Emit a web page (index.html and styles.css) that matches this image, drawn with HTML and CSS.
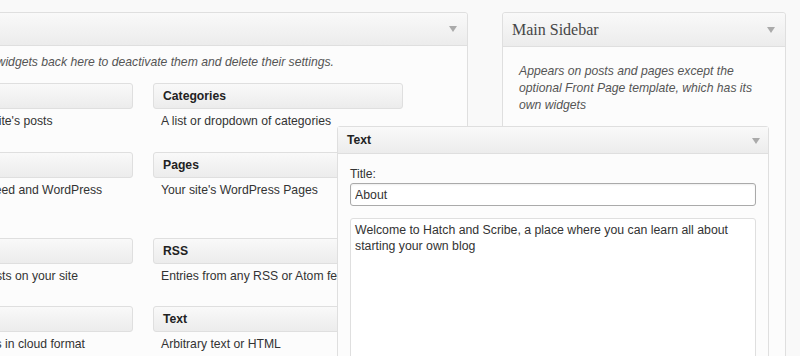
FILE: index.html
```html
<!DOCTYPE html>
<html lang="en">
<head>
    <meta charset="UTF-8">
    <title>Widgets</title>
    <link rel="stylesheet" href="styles.css">
</head>
<body>
    <div class="screen">
        <!-- available widgets -->
        <section class="holder available">
            <div class="holder-name">
                <h3>Available Widgets</h3>
                <span class="arrow"></span>
            </div>
            <p class="help">Drag widgets from here to a sidebar on the right to activate them. Drag widgets back here to deactivate them and delete their settings.</p>
            <div class="widget-list">
                <div class="widget"><div class="widget-top">Archives</div><p class="widget-desc">A monthly archive of your site's posts</p></div>
                <div class="widget"><div class="widget-top">Calendar</div><p class="widget-desc">A calendar of your site's posts</p></div>
                <div class="widget"><div class="widget-top">Categories</div><p class="widget-desc">A list or dropdown of categories</p></div>

                <div class="widget"><div class="widget-top">Custom Menu</div><p class="widget-desc">Use this widget to add one of your custom menus as a widget.</p></div>
                <div class="widget"><div class="widget-top">Meta</div><p class="widget-desc">Log in/out, admin, feed and WordPress links</p></div>
                <div class="widget"><div class="widget-top">Pages</div><p class="widget-desc">Your site's WordPress Pages</p></div>

                <div class="widget"><div class="widget-top">Recent Comments</div><p class="widget-desc">The most recent comments</p></div>
                <div class="widget"><div class="widget-top">Recent Posts</div><p class="widget-desc">The most recent posts on your site</p></div>
                <div class="widget"><div class="widget-top">RSS</div><p class="widget-desc">Entries from any RSS or Atom feed</p></div>

                <div class="widget"><div class="widget-top">Search</div><p class="widget-desc">A search form for your site</p></div>
                <div class="widget"><div class="widget-top">Tag Cloud</div><p class="widget-desc">Your most used tags in cloud format</p></div>
                <div class="widget"><div class="widget-top">Text</div><p class="widget-desc">Arbitrary text or HTML</p></div>
            </div>
        </section>

        <!-- sidebar -->
        <section class="holder sidebar">
            <div class="holder-name sidebar-name">
                <h3>Main Sidebar</h3>
                <span class="arrow"></span>
            </div>
            <p class="sidebar-desc">Appears on posts and pages except the optional Front Page template, which has its own widgets</p>
        </section>
    </div>

    <!-- widget being dragged into the sidebar -->
    <div class="dragging">
        <div class="drag-top">
            <span>Text</span>
            <span class="arrow"></span>
        </div>
        <div class="drag-inside">
            <label for="title">Title:</label>
            <input type="text" id="title" value="About">
            <textarea rows="12">Welcome to Hatch and Scribe, a place where you can learn all about starting your own blog</textarea>
        </div>
    </div>
</body>
</html>
```

FILE: styles.css
```css
html, body {
    margin: 0;
    padding: 0;
    height: 100%;
    overflow: hidden;
}

body {
    background-color: #f9f9f9;
    font-family: "Liberation Sans", Arial, sans-serif;
    font-size: 12.2px;
    color: #333333;
}

.screen {
    display: flex;
    align-items: flex-start;
    gap: 34px;
    padding-top: 12px;
    margin-left: -400px;
}

.holder {
    flex: none;
    background-color: #fcfcfc;
    border: 1px solid #dfdfdf;
    border-radius: 3px;
    height: 400px;
}

.available {
    width: 866px;
}

.sidebar {
    width: 282px;
}

.holder-name {
    display: flex;
    align-items: center;
    justify-content: space-between;
    height: 32px;
    padding: 0 10px 0 9px;
    background-image: linear-gradient(#f9f9f9, #ececec);
    border-bottom: 1px solid #dfdfdf;
    border-radius: 3px 3px 0 0;
}

.sidebar-name {
    height: 33px;
}

.holder-name h3 {
    margin: 0;
    font-family: "Liberation Serif", Georgia, serif;
    font-weight: normal;
    font-size: 16px;
    color: #464646;
}

.arrow {
    width: 0;
    height: 0;
    border-left: 4px solid transparent;
    border-right: 4px solid transparent;
    border-top: 6px solid #aaaaaa;
}

.help {
    margin: 8px 0 0;
    padding-right: 133px;
    text-align: right;
    font-style: italic;
    color: #555555;
    line-height: 17px;
    white-space: nowrap;
}

.widget-list {
    display: grid;
    grid-template-columns: repeat(3, 250px);
    column-gap: 20px;
    padding: 12px 12px 0;
}

.widget {
    margin-bottom: 21px;
}

.widget-top {
    height: 24px;
    line-height: 24px;
    padding: 0 9px;
    font-weight: bold;
    color: #222222;
    background-image: linear-gradient(#f9f9f9, #ececec);
    border: 1px solid #dfdfdf;
    border-radius: 3px;
}

.widget-desc {
    margin: 4px 0 0;
    padding: 0 8px;
    line-height: 17.5px;
    color: #333333;
}

.sidebar-desc {
    margin: 16px 0 0;
    padding: 0 16px;
    font-style: italic;
    line-height: 17px;
    color: #555555;
}

/* widget held over the page while dragging */
.dragging {
    position: absolute;
    left: 337px;
    top: 126px;
    width: 430px;
    height: 300px;
    background-color: #fcfcfc;
    border: 1px solid #dfdfdf;
    border-radius: 3px;
}

.drag-top {
    display: flex;
    align-items: center;
    justify-content: space-between;
    height: 26px;
    padding: 0 8px 0 9px;
    font-weight: bold;
    color: #222222;
    background-image: linear-gradient(#f9f9f9, #ececec);
    border-bottom: 1px solid #dfdfdf;
}

.drag-top .arrow {
    margin-top: 2px;
}

.drag-inside {
    padding: 12px 12px 0 12px;
}

.drag-inside label {
    display: block;
    line-height: 16px;
    color: #333333;
}

.drag-inside input,
.drag-inside textarea {
    display: block;
    box-sizing: border-box;
    width: 406px;
    margin: 1px 0 0;
    font-family: "Liberation Sans", Arial, sans-serif;
    font-size: 12.3px;
    color: #333333;
    background-color: #ffffff;
    border-radius: 3px;
}

.drag-inside input {
    height: 23px;
    padding: 0 4px;
    border: 1px solid #aaaaaa;
    box-shadow: inset 0 1px 2px rgba(0, 0, 0, 0.07);
}

.drag-inside textarea {
    margin-top: 12px;
    height: 200px;
    padding: 3px 4px;
    line-height: 16px;
    border: 1px solid #dfdfdf;
    resize: none;
}
```
